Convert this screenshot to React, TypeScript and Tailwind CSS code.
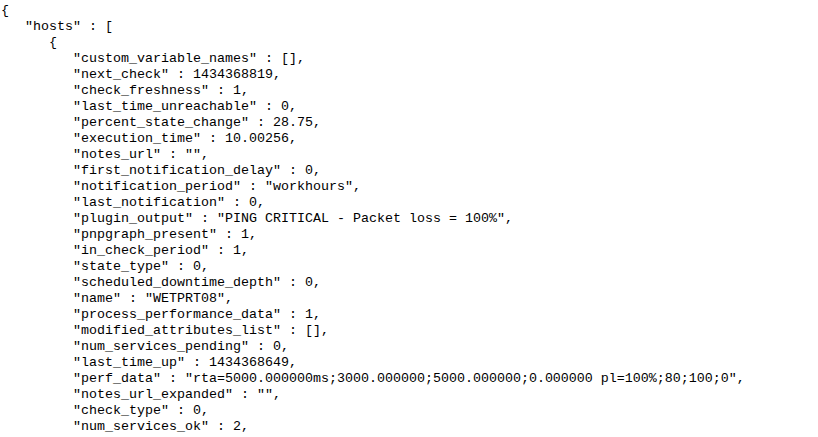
import React from "react";

const lines: string[] = [
  "{",
  '   "hosts" : [',
  "      {",
  '         "custom_variable_names" : [],',
  '         "next_check" : 1434368819,',
  '         "check_freshness" : 1,',
  '         "last_time_unreachable" : 0,',
  '         "percent_state_change" : 28.75,',
  '         "execution_time" : 10.00256,',
  '         "notes_url" : "",',
  '         "first_notification_delay" : 0,',
  '         "notification_period" : "workhours",',
  '         "last_notification" : 0,',
  '         "plugin_output" : "PING CRITICAL - Packet loss = 100%",',
  '         "pnpgraph_present" : 1,',
  '         "in_check_period" : 1,',
  '         "state_type" : 0,',
  '         "scheduled_downtime_depth" : 0,',
  '         "name" : "WETPRT08",',
  '         "process_performance_data" : 1,',
  '         "modified_attributes_list" : [],',
  '         "num_services_pending" : 0,',
  '         "last_time_up" : 1434368649,',
  '         "perf_data" : "rta=5000.000000ms;3000.000000;5000.000000;0.000000 pl=100%;80;100;0",',
  '         "notes_url_expanded" : "",',
  '         "check_type" : 0,',
  '         "num_services_ok" : 2,',
];

const App = () => {
  return (
    <div className="w-[818px] h-[437px] overflow-hidden bg-white">
      <pre className="m-0 pt-[3px] pl-[1px] font-['Liberation_Mono',monospace] text-[13.33px] leading-4 text-black">
        {lines.join("\n")}
      </pre>
    </div>
  );
};

export default App;
